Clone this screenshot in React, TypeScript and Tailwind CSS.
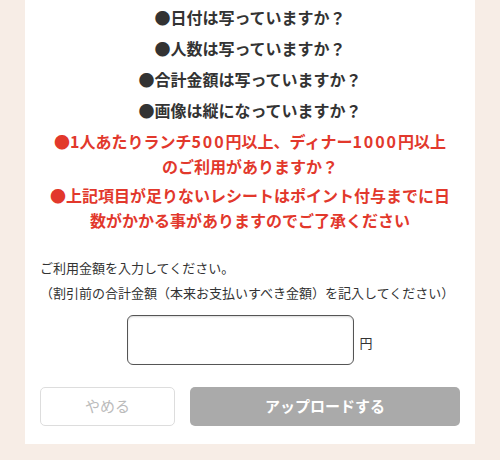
const checks = [
  "●日付は写っていますか？",
  "●人数は写っていますか？",
  "●合計金額は写っていますか？",
  "●画像は縦になっていますか？",
];

export default function App() {
  return (
    <div
      className="w-[500px] h-[460px] bg-[#f7ede6] px-[25px] overflow-hidden"
      style={{ fontFamily: '"Noto Sans CJK JP", "Noto Sans", sans-serif' }}
    >
      <div className="bg-white px-[15px] pt-[5px] pb-[18px]">
        <div className="flex flex-col gap-[6px] text-center text-[16px] font-semibold leading-[25px]">
          {checks.map((c) => (
            <p key={c} className="text-[#333333]">
              {c}
            </p>
          ))}
          <p className="text-[#e2382c]">
            ●1人あたりランチ<span className="tracking-[0.12em]">500</span>円以上、ディナー<span className="tracking-[0.12em]">1000</span>円以上
            <br />
            のご利用がありますか？
          </p>
          <p className="text-[#e2382c] -mt-[2px]">
            ●上記項目が足りないレシートはポイント付与までに日
            <br />
            数がかかる事がありますのでご了承ください
          </p>
        </div>

        <div className="mt-[22px] text-[13px] leading-[25px] text-[#333333]">
          <p>ご利用金額を入力してください。</p>
          <p>（割引前の合計金額（本来お支払いすべき金額）を記入してください）</p>
        </div>

        <div className="mt-[10px] flex items-center justify-center gap-[5px]">
          <input
            type="text"
            className="w-[227px] h-[50px] rounded-[6px] border-[1.5px] border-[#555555] bg-white shadow-[inset_0_1px_2px_rgba(0,0,0,0.15)] outline-none"
          />
          <span className="mt-[6px] text-[13px] text-[#333333]">円</span>
        </div>

        <div className="mt-[22px] flex gap-[15px]">
          <button className="w-[135px] h-[39px] rounded-[5px] border border-[#dddddd] bg-white text-[15px] text-[#bbbbbb]">
            やめる
          </button>
          <button className="flex-1 h-[39px] rounded-[5px] bg-[#aaaaaa] text-[15px] font-semibold text-white">
            アップロードする
          </button>
        </div>
      </div>
    </div>
  );
}
